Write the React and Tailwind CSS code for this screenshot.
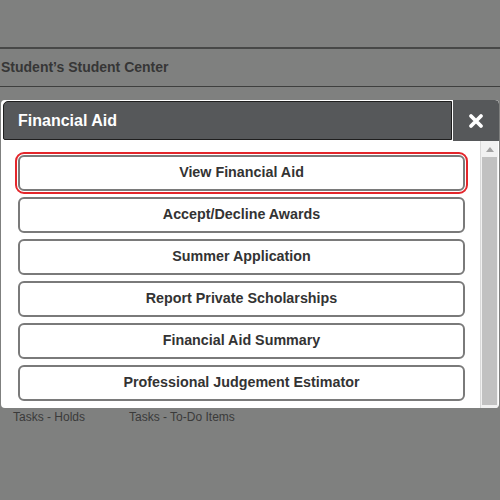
import React from "react";

const items = [
  "View Financial Aid",
  "Accept/Decline Awards",
  "Summer Application",
  "Report Private Scholarships",
  "Financial Aid Summary",
  "Professional Judgement Estimator",
];

export default function App() {
  return (
    <div
      className="relative w-[500px] h-[500px] overflow-hidden bg-[#7f807f] text-[#333]"
      style={{ fontFamily: '"Liberation Sans", Arial, sans-serif' }}
    >
      {/* Page behind the dialog */}
      <div className="h-[47px]" />
      <div className="h-[2px] bg-[#474847]" />
      <div className="h-[37px] flex items-center pl-[1px]">
        <span className="text-[14px] font-bold text-[#363636]">Student’s Student Center</span>
      </div>
      <div className="h-[1px] bg-[#3e3f3e]" />
      <div className="h-[323px]" />
      <div className="flex text-[12px] leading-[14px] text-[#3a3a3a]">
        <span className="ml-[13px] w-[116px]">Tasks - Holds</span>
        <span>Tasks - To-Do Items</span>
      </div>

      {/* Dialog */}
      <div className="absolute top-[100px] left-[1px] w-[498px] h-[308px] bg-white rounded-[4px] flex flex-col overflow-hidden">
        <div className="flex h-[41px] shrink-0">
          <div className="flex-1 ml-[2px] mt-[1px] h-[39px] bg-[#56585a] border border-[#1e1e1e] rounded-tl-[5px] rounded-bl-[2px] flex items-center pl-[14px]">
            <span className="text-white font-bold text-[16px]">Financial Aid</span>
          </div>
          <div className="w-[46px] h-[41px] ml-[1px] bg-[#56585a] rounded-tr-[4px] flex items-center justify-center">
            <svg width="16" height="16" viewBox="0 0 16 16">
              <path d="M3 3 L13 13 M13 3 L3 13" stroke="white" strokeWidth="3.8" strokeLinecap="round" />
            </svg>
          </div>
        </div>
        <div className="flex flex-1 min-h-0">
          <div className="flex-1 pl-[17px] pr-[15px] pt-[14px] flex flex-col gap-[6px]">
            {items.map((label, i) => (
              <div
                key={label}
                className={
                  i === 0
                    ? "h-[36px] shrink-0 bg-white border-2 border-[#7a7a7a] rounded-[6px] flex items-center justify-center outline-2 outline-[#e3262b] outline-offset-[1px]"
                    : "h-[36px] shrink-0 bg-white border-2 border-[#7a7a7a] rounded-[6px] flex items-center justify-center"
                }
              >
                <span className="text-[14.3px] font-bold text-[#333]">{label}</span>
              </div>
            ))}
          </div>
          {/* Scrollbar */}
          <div className="w-[18px] mr-[1px] bg-[#f1f1f1] border-l border-[#d9d9d9] flex flex-col items-center">
            <div className="h-[16px] flex items-center justify-center">
              <svg width="8" height="5" viewBox="0 0 8 5">
                <path d="M0 5 L4 0 L8 5 Z" fill="#a3a3a3" />
              </svg>
            </div>
            <div className="w-[15px] flex-1 mb-[3px] bg-[#c1c1c1]" />
          </div>
        </div>
      </div>
    </div>
  );
}
